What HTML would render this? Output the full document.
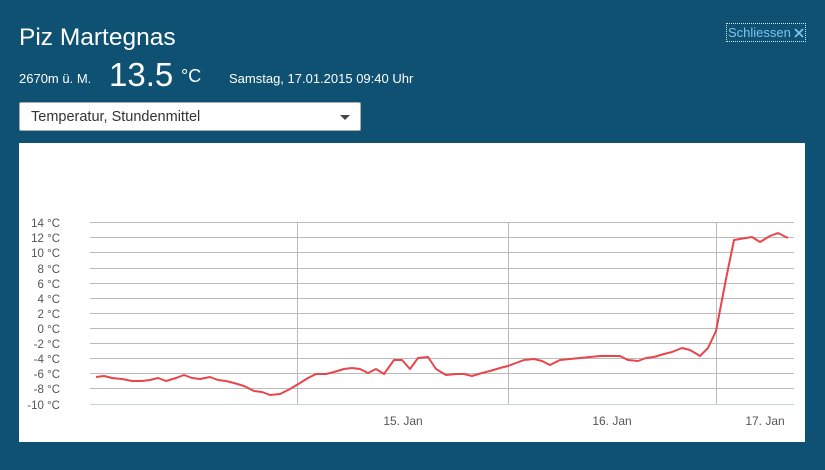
<!DOCTYPE html>
<html><head><meta charset="utf-8"><style>
body{margin:0;width:825px;height:470px;background:#0e5172;font-family:"Liberation Sans",sans-serif;color:#fff;position:relative;overflow:hidden}
.a{position:absolute;white-space:nowrap}
</style></head><body>
<div class="a" style="left:19px;top:24px;font-size:24.5px">Piz Martegnas</div>
<div class="a" style="left:19px;top:71px;font-size:13px">2670m ü. M.</div>
<div class="a" style="left:109px;top:56px;font-size:33px;font-weight:300">13.5</div>
<div class="a" style="left:181px;top:66px;font-size:18px">°C</div>
<div class="a" style="left:229px;top:71px;font-size:13px">Samstag, 17.01.2015 09:40 Uhr</div>
<div class="a" style="left:726px;top:23px;width:78px;height:17px;border:1px dotted #cfe6f5;color:#7cc4ef;font-size:13px;line-height:17px"><span style="position:absolute;left:1px;top:0">Schliessen</span>
<svg style="position:absolute;left:67px;top:4px" width="10" height="10" viewBox="0 0 10 10"><path d="M1 1L9 9M9 1L1 9" stroke="#7cc4ef" stroke-width="1.8"/></svg></div>
<div class="a" style="left:19px;top:102px;width:340px;height:27px;background:#fff;border:1px solid #aaa;border-radius:2px;color:#333;font-size:14.5px;line-height:28px;text-indent:11px">Temperatur, Stundenmittel
<span style="position:absolute;right:10px;top:12px;width:0;height:0;border-left:5px solid transparent;border-right:5px solid transparent;border-top:5px solid #444"></span></div>
<svg class="a" style="left:19px;top:143px" width="786" height="299" viewBox="19 143 786 299">
<rect x="19" y="143" width="786" height="299" fill="#fff"/>
<g stroke="#bbb" stroke-width="1">
<line x1="90" x2="794" y1="222.5" y2="222.5"/><line x1="90" x2="794" y1="237.5" y2="237.5"/><line x1="90" x2="794" y1="252.5" y2="252.5"/><line x1="90" x2="794" y1="268.5" y2="268.5"/><line x1="90" x2="794" y1="283.5" y2="283.5"/><line x1="90" x2="794" y1="298.5" y2="298.5"/><line x1="90" x2="794" y1="313.5" y2="313.5"/><line x1="90" x2="794" y1="328.5" y2="328.5"/><line x1="90" x2="794" y1="343.5" y2="343.5"/><line x1="90" x2="794" y1="358.5" y2="358.5"/><line x1="90" x2="794" y1="373.5" y2="373.5"/><line x1="90" x2="794" y1="388.5" y2="388.5"/>
<line x1="297.5" x2="297.5" y1="222" y2="404"/><line x1="508.5" x2="508.5" y1="222" y2="404"/><line x1="716.5" x2="716.5" y1="222" y2="404"/>
</g>
<line x1="90" x2="794" y1="404.5" y2="404.5" stroke="#c5d3de"/>
<g font-size="11.5" fill="#555" text-anchor="end" font-family="Liberation Sans,sans-serif">
<text x="60" y="227">14 °C</text><text x="60" y="242">12 °C</text><text x="60" y="257">10 °C</text><text x="60" y="273">8 °C</text><text x="60" y="288">6 °C</text><text x="60" y="303">4 °C</text><text x="60" y="318">2 °C</text><text x="60" y="333">0 °C</text><text x="60" y="348">-2 °C</text><text x="60" y="363">-4 °C</text><text x="60" y="378">-6 °C</text><text x="60" y="393">-8 °C</text><text x="60" y="409">-10 °C</text>
</g>
<g font-size="12" fill="#555" text-anchor="middle" font-family="Liberation Sans,sans-serif">
<text x="403" y="425">15. Jan</text><text x="612" y="425">16. Jan</text><text x="765" y="425">17. Jan</text>
</g>
<polyline fill="none" stroke="#e8464b" stroke-width="2" stroke-linejoin="round" points="96,377 104,376 112,378 122,379 132,381 142,381 150,380 158,378 166,381 176,378 184,375 192,378 200,379 210,377 218,380 226,381 234,383 244,386 254,391 262,392 270,395 280,394 290,389 300,383 308,378 316,374 326,374 334,372 344,369 352,368 360,369 368,373 376,369 384,374 394,360 402,360 410,369 418,358 428,357 436,369 446,375 456,374 464,374 472,376 482,373 490,371 500,368 508,366 516,363 524,360 534,359 542,361 550,365 560,360 570,359 580,358 590,357 600,356 608,356 620,356 628,360 638,361 646,358 654,357 664,354 672,352 682,348 690,350 700,356 708,348 716,331 726,279 734,240 752,237 760,242 770,236 778,233 788,238"/>
</svg>
</body></html>
